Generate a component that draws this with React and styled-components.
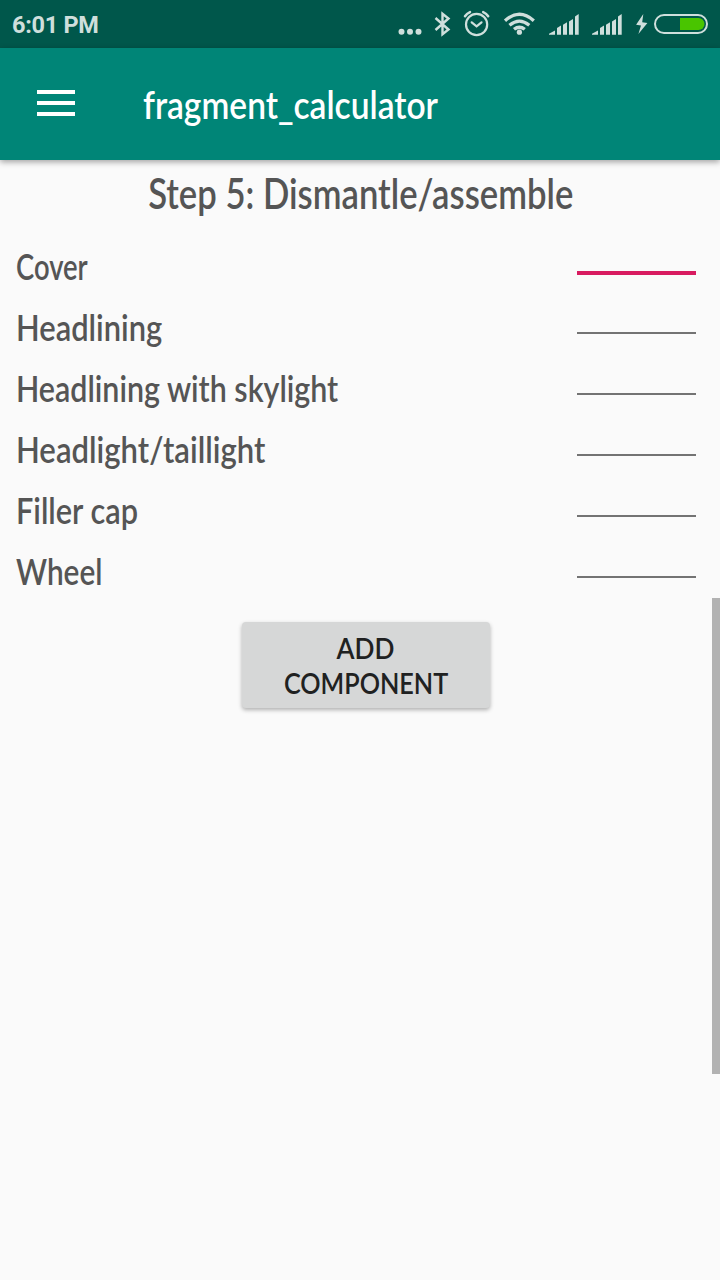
import React from "react";
import styled, { createGlobalStyle } from "styled-components";

const GlobalStyle = createGlobalStyle`
  * { box-sizing: border-box; }
  html, body { margin: 0; padding: 0; background: #fafafa; }
`;

const Screen = styled.div`
  position: relative;
  display: flex;
  flex-direction: column;
  width: 720px;
  height: 1280px;
  overflow: hidden;
  background: #fafafa;
  font-family: Lato, "Liberation Sans", sans-serif;
  font-weight: 600;
  color: #555;
`;

const StatusBar = styled.header`
  display: flex;
  align-items: center;
  justify-content: space-between;
  flex: none;
  height: 48px;
  padding-left: 12px;
  background: #00574b;
`;

const Clock = styled.time`
  font: 700 23.5px/28px Roboto, sans-serif;
  letter-spacing: -0.3px;
  padding-top: 2px;
  color: #cfdfdc;
`;

const StatusIcons = styled.svg`
  display: block;
  width: 330px;
  height: 48px;
  color: #cfdfdc;
`;

const AppBar = styled.div`
  z-index: 1;
  display: flex;
  align-items: center;
  flex: none;
  height: 112px;
  padding-left: 37px;
  background: #008577;
  box-shadow: 0 2px 6px rgba(0, 0, 0, 0.36);
`;

const MenuButton = styled.button`
  display: flex;
  flex-direction: column;
  gap: 7px;
  width: 38px;
  margin: 0 68px 2px 0;
  padding: 0;
  border: 0;
  background: none;
`;

const MenuLine = styled.span`
  height: 4px;
  background: #fff;
`;

const Condensed = styled.span`
  display: inline-block;
  white-space: nowrap;
  transform: scaleX(${(p) => p.$ratio});
  transform-origin: ${(p) => p.$origin || "left"} center;
`;

const Title = styled.h1`
  margin: 0;
  font-size: 39px;
  font-weight: 600;
  line-height: 48px;
  color: #fff;
`;

const Content = styled.main`
  display: flex;
  flex-direction: column;
  flex: 1;
`;

const StepHeading = styled.h2`
  display: flex;
  justify-content: center;
  height: 78px;
  margin: 0;
  padding: 7px 0 0 1px;
  font-size: 43px;
  font-weight: 600;
  line-height: 52px;
`;

const Row = styled.label`
  display: flex;
  align-items: flex-start;
  justify-content: space-between;
  height: 61px;
  padding: 0 24px 0 16px;
`;

const RowLabel = styled.span`
  padding-top: 6px;
  font-size: 37px;
  line-height: 44px;
`;

const Field = styled.input`
  width: 119px;
  height: ${(p) => (p.$active ? 37 : 35)}px;
  padding: 0;
  border: 0;
  border-bottom: ${(p) => (p.$active ? "4px solid #d81b60" : "2px solid #737373")};
  border-radius: 0;
  outline: 0;
  background: transparent;
  caret-color: transparent;
`;

const AddButton = styled.button`
  display: flex;
  flex-direction: column;
  align-items: center;
  width: 248px;
  height: 86px;
  margin: 18px 0 0 242px;
  padding: 8px 0 0;
  border: 0;
  border-radius: 4px;
  background: #d6d7d7;
  box-shadow: 0 2px 4px rgba(0, 0, 0, 0.3);
  font: 600 29.5px/35px Lato, sans-serif;
  color: #202121;
`;

const ScrollThumb = styled.div`
  position: absolute;
  top: 598px;
  right: 0;
  width: 8px;
  height: 476px;
  background: #b2b2b2;
`;

const components = [
  { name: "Cover", ratio: 0.74, active: true },
  { name: "Headlining", ratio: 0.835 },
  { name: "Headlining with skylight", ratio: 0.822 },
  { name: "Headlight/taillight", ratio: 0.84 },
  { name: "Filler cap", ratio: 0.83 },
  { name: "Wheel", ratio: 0.805 },
];

const signalBars = [
  "M0 34.7v-1l6-3.2v4.2z",
  "M8 34.7v-6.7l4-2.5v9.2z",
  "M14 34.7v-9.9l4-2.5v12.4z",
  "M20 34.7v-13.1l4-2.5v15.6z",
  "M26 34.7v-18.3l3.7-2.3v20.6z",
];

function Signal({ x }) {
  return (
    <g transform={`translate(${x} 0)`} fill="currentColor">
      {signalBars.map((d) => (
        <path key={d} d={d} />
      ))}
    </g>
  );
}

function StatusGlyphs() {
  return (
    <StatusIcons viewBox="390 0 330 48" fill="none" stroke="none">
      <g fill="currentColor">
        <circle cx="401.5" cy="31.7" r="3" />
        <circle cx="410" cy="31.7" r="3" />
        <circle cx="418.5" cy="31.7" r="3" />
      </g>
      <path d="M435.5 18l13 11.5-6 4.8V13.8l6 4.7-13 11.5" stroke="currentColor" strokeWidth="2.4" />
      <g stroke="currentColor" strokeWidth="2.2" strokeLinecap="round">
        <circle cx="476.6" cy="24.5" r="10.6" />
        <path d="M471.7 22.3l4.9 4.1 4.9-4.1" />
        <path d="M465 16.3q1.8-2.8 5-4.2M488.2 16.3q-1.8-2.8-5-4.2" strokeWidth="2.5" />
      </g>
      <g stroke="currentColor" strokeWidth="3.3">
        <path d="M505 20.7q14.4-12.8 28.8 0M509.5 25.2q9.9-8.2 19.8 0M514 29.3q5.4-4.2 10.8 0" />
      </g>
      <circle cx="519.4" cy="32.2" r="2.6" fill="currentColor" />
      <Signal x={549} />
      <Signal x={592} />
      <path d="M643.3 14l-7.2 10.8 4.9.6-2.6 8.6 9-11-5.2-.8z" fill="currentColor" />
      <rect x="655" y="15" width="52" height="18" rx="9" stroke="currentColor" strokeWidth="2" />
      <path d="M680 18h18.5a6 6 0 0 1 0 12H680z" fill="#49c500" />
    </StatusIcons>
  );
}

export default function App() {
  return (
    <Screen>
      <GlobalStyle />
      <StatusBar>
        <Clock>6:01 PM</Clock>
        <StatusGlyphs />
      </StatusBar>
      <AppBar>
        <MenuButton aria-label="Menu">
          <MenuLine />
          <MenuLine />
          <MenuLine />
        </MenuButton>
        <Title>
          <Condensed $ratio={0.86}>fragment_calculator</Condensed>
        </Title>
      </AppBar>
      <Content>
        <StepHeading>
          <Condensed $ratio={0.806} $origin="center">Step 5: Dismantle/assemble</Condensed>
        </StepHeading>
        {components.map(({ name, ratio, active }) => (
          <Row key={name}>
            <RowLabel>
              <Condensed $ratio={ratio}>{name}</Condensed>
            </RowLabel>
            <Field $active={active} aria-label={name} />
          </Row>
        ))}
        <AddButton>
          <Condensed $ratio={0.89} $origin="center">ADD</Condensed>
          <Condensed $ratio={0.855} $origin="center">COMPONENT</Condensed>
        </AddButton>
      </Content>
      <ScrollThumb />
    </Screen>
  );
}
